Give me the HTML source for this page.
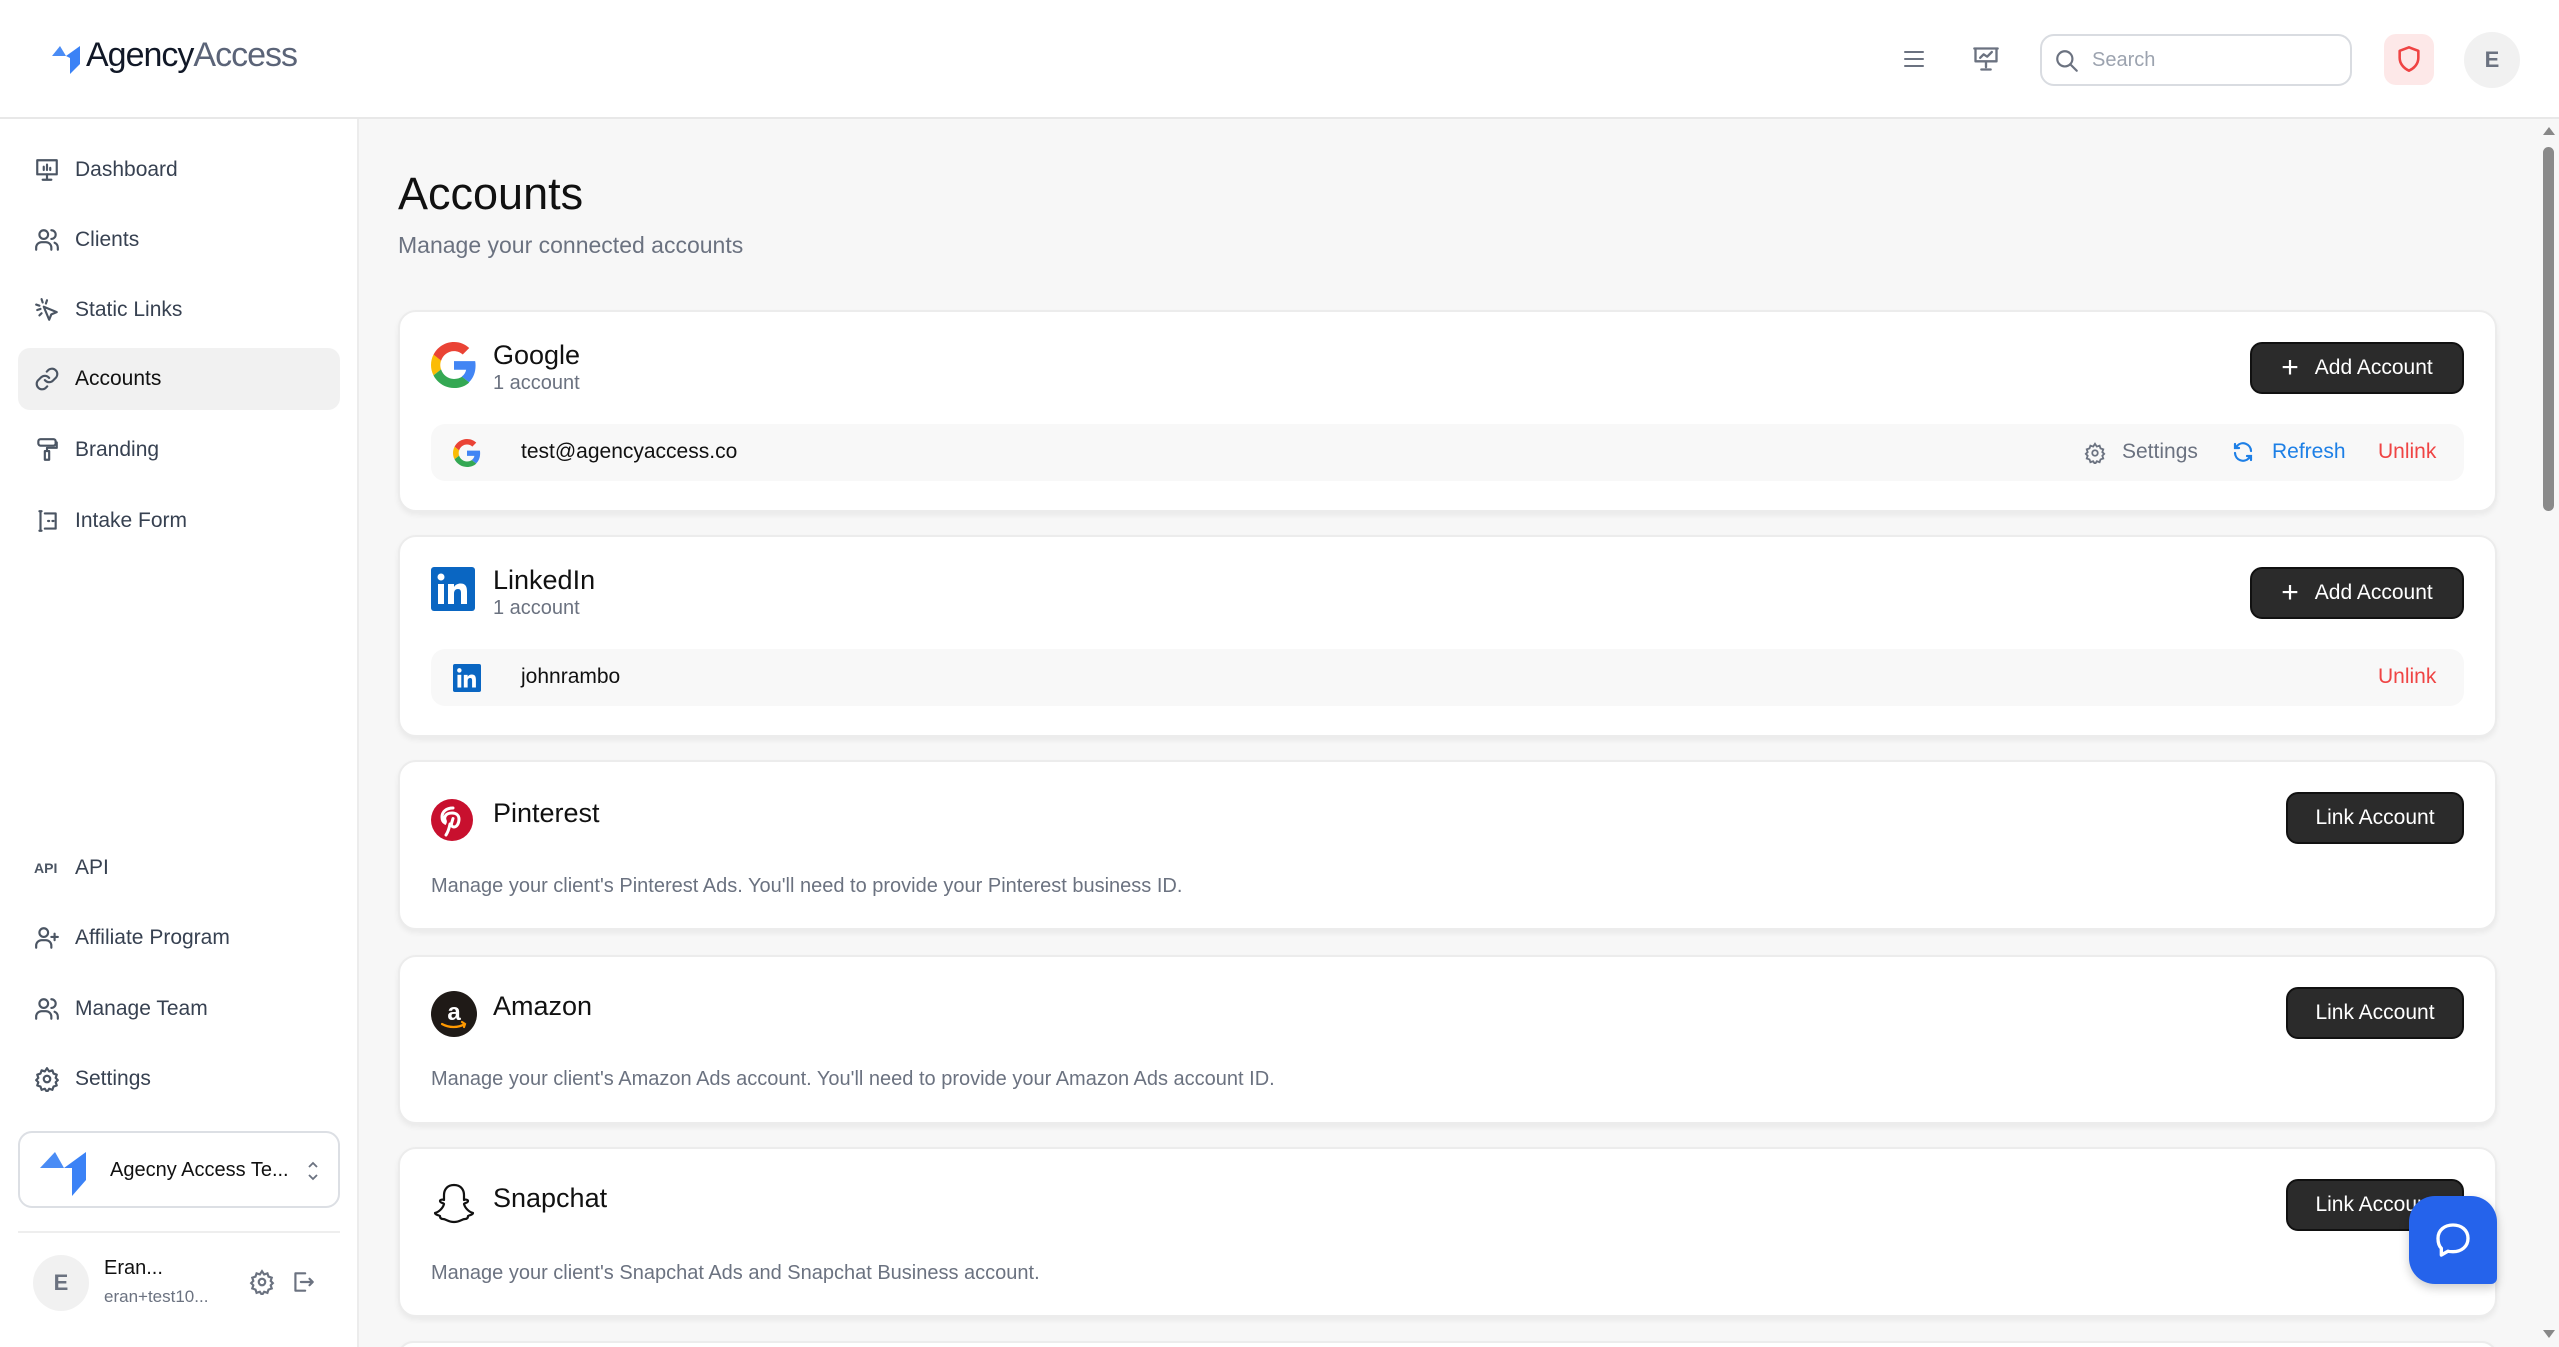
<!DOCTYPE html>
<html><head><meta charset="utf-8"><style>
*{box-sizing:border-box;margin:0;padding:0}
html,body{width:2559px;height:1347px;overflow:hidden}
body{background:#f7f7f7;font-family:"Liberation Sans",sans-serif;color:#111}
#wrap{position:relative;width:2559px;height:1347px;overflow:hidden}
.hdr{position:absolute;left:0;top:0;width:2559px;height:119px;background:#fff;border-bottom:2px solid #e8e8e8}
.side{position:absolute;left:0;top:119px;width:359px;height:1228px;background:#fff;border-right:2px solid #ececec}
.nav{position:absolute;left:18px;width:322px;height:62px;display:flex;align-items:center;font-size:21px;color:#374151;border-radius:12px}
.nav svg{position:absolute;left:16px;width:26px;height:26px;fill:none;stroke:#4b5563;stroke-width:2;stroke-linecap:round;stroke-linejoin:round}
.nav span{position:absolute;left:57px}
.nav.act{background:#f1f1f1;color:#111}
.card{position:absolute;left:398px;width:2099px;background:#fff;border:2px solid #ececec;border-radius:18px;box-shadow:0 3px 6px rgba(0,0,0,.06)}
.title{position:absolute;left:93px;font-size:27px;color:#111}
.sub{position:absolute;left:93px;font-size:20px;color:#6b7280}
.row{position:absolute;left:31px;right:31px;height:57px;background:#f8f8f8;border-radius:14px}
.row .t{position:absolute;left:90px;top:16px;font-size:21px}
.btn{position:absolute;right:31px;height:52px;background:#2b2b2b;border:2px solid #111;border-radius:12px;color:#fff;font-size:21px;display:flex;align-items:center;justify-content:center}
.desc{position:absolute;left:31px;font-size:20px;color:#6b7280}
.ic{position:absolute;left:31px}
</style></head><body><div id="wrap">
<div class="hdr">
 <svg style="position:absolute;left:50px;top:42px" width="34" height="34" viewBox="0 0 34 34"><path d="M2 14 L10 4 L16 14 Z" fill="#4a8cf5"/><path d="M16 14 L30 4 L30 22 L20 32 L20 16 Z" fill="#3b82f6"/></svg>
 <div style="position:absolute;left:86px;top:36px;font-size:34px;letter-spacing:-1px"><span style="color:#111827">Agency</span><span style="color:#5b6478">Access</span></div>
 <svg style="position:absolute;left:1902px;top:47px" width="24" height="24" viewBox="0 0 24 24" fill="none" stroke="#6b7280" stroke-width="2" stroke-linecap="round"><path d="M3 5h18M3 12h18M3 19h18"/></svg>
 <svg style="position:absolute;left:1972px;top:45px" width="28" height="28" viewBox="0 0 24 24" fill="none" stroke="#6b7280" stroke-width="2" stroke-linecap="round" stroke-linejoin="round"><path d="M2 3h20M3 3v11h18V3M12 14v5M8 21h8M7 11l3-3 3 2 4-4"/></svg>
 <div style="position:absolute;left:2040px;top:34px;width:312px;height:52px;border:2px solid #d9dce1;border-radius:14px">
  <svg style="position:absolute;left:12px;top:12px" width="26" height="26" viewBox="0 0 24 24" fill="none" stroke="#6b7280" stroke-width="2" stroke-linecap="round"><circle cx="10" cy="10" r="7"/><path d="M15 15l6 6"/></svg>
  <span style="position:absolute;left:50px;top:13px;font-size:20px;color:#9ca3af">Search</span></div>
 <div style="position:absolute;left:2384px;top:34px;width:50px;height:51px;background:#fde8e8;border-radius:12px">
  <svg style="position:absolute;left:11px;top:11px" width="28" height="28" viewBox="0 0 24 24" fill="none" stroke="#ef4444" stroke-width="2.2" stroke-linejoin="round"><path d="M12 2l8 3v6c0 5-3.5 9-8 11-4.5-2-8-6-8-11V5z"/></svg></div>
 <div style="position:absolute;left:2464px;top:32px;width:56px;height:56px;border-radius:50%;background:#f1f1f1;color:#6b7280;font-size:22px;font-weight:bold;display:flex;align-items:center;justify-content:center">E</div>
</div>
<div class="side">
 <div class="nav" style="top:20px"><svg viewBox="0 0 24 24"><rect x="3" y="3" width="18" height="13"/><path d="M12 16v5M8 21h8M9 12V9M12 12V7M15 12v-2"/></svg><span>Dashboard</span></div>
 <div class="nav" style="top:90px"><svg viewBox="0 0 24 24"><circle cx="9" cy="7" r="4"/><path d="M2 21v-2a5 5 0 0 1 5-5h4a5 5 0 0 1 5 5v2M16 3a4 4 0 0 1 0 8M22 21v-2a5 5 0 0 0-3-4.5"/></svg><span>Clients</span></div>
 <div class="nav" style="top:160px"><svg viewBox="0 0 24 24"><path d="M9 9l5 12 2-5 5-2z M7 2l1 3M2 7l3 1M12 3l-1 3M3 12l3-1M5 17l2-2"/></svg><span>Static Links</span></div>
 <div class="nav act" style="top:229px"><svg viewBox="0 0 24 24"><path d="M10 13a5 5 0 0 0 7.5.5l3-3a5 5 0 0 0-7-7l-1.7 1.7M14 11a5 5 0 0 0-7.5-.5l-3 3a5 5 0 0 0 7 7l1.7-1.7"/></svg><span>Accounts</span></div>
 <div class="nav" style="top:300px"><svg viewBox="0 0 24 24"><rect x="4" y="2" width="16" height="6" rx="2"/><path d="M20 5h1v5h-9v3M10 13h4v8h-4z"/></svg><span>Branding</span></div>
 <div class="nav" style="top:371px"><svg viewBox="0 0 24 24"><path d="M5 3h2M5 21h2M6 3v18M10 5h10v14H10M13 12h1M17 12h1"/></svg><span>Intake Form</span></div>
 <div class="nav" style="top:718px"><span style="left:16px;font-size:14px;font-weight:bold;color:#4b5563">API</span><span>API</span></div>
 <div class="nav" style="top:788px"><svg viewBox="0 0 24 24"><circle cx="9" cy="7" r="4"/><path d="M2 21v-2a5 5 0 0 1 5-5h4a5 5 0 0 1 5 5v2M19 8v6M16 11h6"/></svg><span>Affiliate Program</span></div>
 <div class="nav" style="top:859px"><svg viewBox="0 0 24 24"><circle cx="9" cy="7" r="4"/><path d="M2 21v-2a5 5 0 0 1 5-5h4a5 5 0 0 1 5 5v2M16 3a4 4 0 0 1 0 8M22 21v-2a5 5 0 0 0-3-4.5"/></svg><span>Manage Team</span></div>
 <div class="nav" style="top:929px"><svg viewBox="0 0 24 24"><circle cx="12" cy="12" r="3"/><path d="M12 2l2 3 3-1 1 3 3 1-1 3 2 2-2 2 1 3-3 1-1 3-3-1-2 3-2-3-3 1-1-3-3-1 1-3-2-2 2-2-1-3 3-1 1-3 3 1z"/></svg><span>Settings</span></div>
 <div style="position:absolute;left:18px;top:1012px;width:322px;height:77px;border:2px solid #dcdfe4;border-radius:14px">
  <svg style="position:absolute;left:20px;top:13px" width="50" height="50" viewBox="0 0 50 50"><path d="M0 22L15 6 24 22Z" fill="#4a8cf5"/><path d="M24 22L46 6V34L32 50V22Z" fill="#3b82f6"/></svg>
  <span style="position:absolute;left:90px;top:26px;font-size:20px">Agecny Access Te...</span>
  <svg style="position:absolute;left:286px;top:26px" width="14" height="24" viewBox="0 0 14 24" fill="none" stroke="#6b7280" stroke-width="1.8"><path d="M3 8l4-4 4 4M3 16l4 4 4-4"/></svg></div>
 <div style="position:absolute;left:18px;top:1112px;width:322px;height:2px;background:#eee"></div>
 <div style="position:absolute;left:33px;top:1136px;width:56px;height:56px;border-radius:50%;background:#f1f1f1;color:#6b7280;font-size:22px;font-weight:bold;display:flex;align-items:center;justify-content:center">E</div>
 <div style="position:absolute;left:104px;top:1138px;font-size:20px;color:#111">Eran...</div>
 <div style="position:absolute;left:104px;top:1168px;font-size:17px;color:#6b7280">eran+test10...</div>
 <svg style="position:absolute;left:249px;top:1150px" width="26" height="26" viewBox="0 0 24 24" fill="none" stroke="#6b7280" stroke-width="2"><circle cx="12" cy="12" r="3"/><path d="M12 2l2 3 3-1 1 3 3 1-1 3 2 2-2 2 1 3-3 1-1 3-3-1-2 3-2-3-3 1-1-3-3-1 1-3-2-2 2-2-1-3 3-1 1-3 3 1z"/></svg>
 <svg style="position:absolute;left:290px;top:1150px" width="26" height="26" viewBox="0 0 24 24" fill="none" stroke="#6b7280" stroke-width="2" stroke-linecap="round" stroke-linejoin="round"><path d="M14 4H5v16h9M10 12h11M18 9l3 3-3 3"/></svg>
</div>

<div style="position:absolute;left:398px;top:168px;font-size:45px;color:#111">Accounts</div>
<div style="position:absolute;left:398px;top:232px;font-size:23px;color:#6b7280">Manage your connected accounts</div>

<div class="card" style="top:310px;height:202px">
 <svg class="ic" style="top:30px" width="46" height="46" viewBox="0 0 48 48"><path fill="#EA4335" d="M24 9.5c3.5 0 6.6 1.2 9.1 3.6l6.8-6.8C35.8 2.4 30.3 0 24 0 14.6 0 6.6 5.4 2.6 13.3l7.9 6.2C12.4 13.7 17.7 9.5 24 9.5z"/><path fill="#4285F4" d="M46.5 24.5c0-1.6-.1-3.1-.4-4.5H24v9h12.7c-.6 2.9-2.2 5.4-4.7 7.1l7.6 5.9c4.4-4.1 6.9-10.1 6.9-17.5z"/><path fill="#FBBC05" d="M10.5 28.6c-.5-1.4-.8-3-.8-4.6s.3-3.2.8-4.6l-7.9-6.2C.9 16.5 0 20.1 0 24s.9 7.5 2.6 10.8z"/><path fill="#34A853" d="M24 48c6.5 0 11.9-2.1 15.9-5.8l-7.6-5.9c-2.1 1.4-4.9 2.3-8.3 2.3-6.3 0-11.6-4.2-13.5-10l-7.9 6.2C6.6 42.6 14.6 48 24 48z"/></svg>
 <div class="title" style="top:28px">Google</div><div class="sub" style="top:60px">1 account</div>
 <div class="btn" style="top:30px;width:214px"><span style="font-size:30px;margin-right:16px;font-weight:300">+</span>Add Account</div>
 <div class="row" style="top:112px">
  <svg style="position:absolute;left:22px;top:15px" width="28" height="28" viewBox="0 0 48 48"><path fill="#EA4335" d="M24 9.5c3.5 0 6.6 1.2 9.1 3.6l6.8-6.8C35.8 2.4 30.3 0 24 0 14.6 0 6.6 5.4 2.6 13.3l7.9 6.2C12.4 13.7 17.7 9.5 24 9.5z"/><path fill="#4285F4" d="M46.5 24.5c0-1.6-.1-3.1-.4-4.5H24v9h12.7c-.6 2.9-2.2 5.4-4.7 7.1l7.6 5.9c4.4-4.1 6.9-10.1 6.9-17.5z"/><path fill="#FBBC05" d="M10.5 28.6c-.5-1.4-.8-3-.8-4.6s.3-3.2.8-4.6l-7.9-6.2C.9 16.5 0 20.1 0 24s.9 7.5 2.6 10.8z"/><path fill="#34A853" d="M24 48c6.5 0 11.9-2.1 15.9-5.8l-7.6-5.9c-2.1 1.4-4.9 2.3-8.3 2.3-6.3 0-11.6-4.2-13.5-10l-7.9 6.2C6.6 42.6 14.6 48 24 48z"/></svg>
  <span class="t">test@agencyaccess.co</span>
  <svg style="position:absolute;left:1653px;top:18px" width="22" height="22" viewBox="0 0 24 24" fill="none" stroke="#6b7280" stroke-width="2"><circle cx="12" cy="12" r="3"/><path d="M12 2l2 3 3-1 1 3 3 1-1 3 2 2-2 2 1 3-3 1-1 3-3-1-2 3-2-3-3 1-1-3-3-1 1-3-2-2 2-2-1-3 3-1 1-3 3 1z"/></svg>
  <span style="position:absolute;left:1691px;top:16px;font-size:21px;color:#6b7280">Settings</span>
  <svg style="position:absolute;left:1800px;top:16px" width="24" height="24" viewBox="0 0 24 24" fill="none" stroke="#1d7fe6" stroke-width="2.2" stroke-linecap="round"><path d="M20 11a8 8 0 0 0-14-5l-2 2M4 4v4h4M4 13a8 8 0 0 0 14 5l2-2M20 20v-4h-4"/></svg>
  <span style="position:absolute;left:1841px;top:16px;font-size:21px;color:#1d7fe6">Refresh</span>
  <span style="position:absolute;left:1947px;top:16px;font-size:21px;color:#ef4444">Unlink</span>
 </div>
</div>

<div class="card" style="top:535px;height:202px">
 <svg class="ic" style="top:30px" width="44" height="44" viewBox="0 0 44 44"><rect width="44" height="44" rx="3" fill="#0a66c2"/><rect x="7" y="17" width="6" height="20" fill="#fff"/><circle cx="10" cy="10" r="3.5" fill="#fff"/><path d="M17 17h6v3c1.5-2.5 4-3.5 6.5-3.5 5 0 6.5 3 6.5 8V37h-6V26c0-2.5-.7-4-3-4s-4 1.6-4 4.5V37h-6z" fill="#fff"/></svg>
 <div class="title" style="top:28px">LinkedIn</div><div class="sub" style="top:60px">1 account</div>
 <div class="btn" style="top:30px;width:214px"><span style="font-size:30px;margin-right:16px;font-weight:300">+</span>Add Account</div>
 <div class="row" style="top:112px">
  <svg style="position:absolute;left:22px;top:15px" width="28" height="28" viewBox="0 0 44 44"><rect width="44" height="44" rx="3" fill="#0a66c2"/><rect x="7" y="17" width="6" height="20" fill="#fff"/><circle cx="10" cy="10" r="3.5" fill="#fff"/><path d="M17 17h6v3c1.5-2.5 4-3.5 6.5-3.5 5 0 6.5 3 6.5 8V37h-6V26c0-2.5-.7-4-3-4s-4 1.6-4 4.5V37h-6z" fill="#fff"/></svg>
  <span class="t">johnrambo</span>
  <span style="position:absolute;left:1947px;top:16px;font-size:21px;color:#ef4444">Unlink</span>
 </div>
</div>

<div class="card" style="top:760px;height:170px">
 <svg class="ic" style="top:37px" width="42" height="42" viewBox="0 0 42 42"><circle cx="21" cy="21" r="21" fill="#c8102e"/><path d="M19 25c-1 5-2 8-4 11M22 9c-7 0-11 4-11 9 0 3 1 5 3 6 .5-1 .5-2 0-3-1-2 0-7 7-7 5 0 7 3 7 6 0 4-2 8-5 8-2 0-3-2-2.5-3.5l1.5-5" fill="none" stroke="#fff" stroke-width="3" stroke-linecap="round"/></svg>
 <div class="title" style="top:36px">Pinterest</div>
 <div class="btn" style="top:30px;width:178px">Link Account</div>
 <div class="desc" style="top:113px">Manage your client's Pinterest Ads. You'll need to provide your Pinterest business ID.</div>
</div>

<div class="card" style="top:955px;height:169px">
 <svg class="ic" style="top:34px" width="46" height="46" viewBox="0 0 46 46"><circle cx="23" cy="23" r="23" fill="#1f1a17"/><text x="23" y="29" text-anchor="middle" font-family="Liberation Sans" font-weight="bold" font-size="24" fill="#fff">a</text><path d="M11 33c7 4 16 4 23 0M31 31l3 2-1 3" fill="none" stroke="#f90" stroke-width="2.2" stroke-linecap="round"/></svg>
 <div class="title" style="top:34px">Amazon</div>
 <div class="btn" style="top:30px;width:178px">Link Account</div>
 <div class="desc" style="top:111px">Manage your client's Amazon Ads account. You'll need to provide your Amazon Ads account ID.</div>
</div>

<div class="card" style="top:1147px;height:170px">
 <svg class="ic" style="top:33px" width="46" height="46" viewBox="0 0 46 46"><path d="M23 3c-7 0-10 5-10 10v5c-2-1-4 0-4 1 0 2 4 2 4 3-1 4-5 8-9 9 0 2 4 2 5 3 0 2 1 3 3 3 3 0 5 3 11 3s8-3 11-3c2 0 3-1 3-3 1-1 5-1 5-3-4-1-8-5-9-9 0-1 4-1 4-3 0-1-2-2-4-1v-5c0-5-3-10-10-10z" fill="#fff" stroke="#111" stroke-width="2.2" stroke-linejoin="round"/></svg>
 <div class="title" style="top:34px">Snapchat</div>
 <div class="btn" style="top:30px;width:178px">Link Account</div>
 <div class="desc" style="top:113px">Manage your client's Snapchat Ads and Snapchat Business account.</div>
</div>
<div class="card" style="top:1341px;height:30px"></div>

<div style="position:absolute;left:2409px;top:1196px;width:88px;height:88px;background:#2563eb;border-radius:26px 26px 6px 26px;box-shadow:0 4px 10px rgba(0,0,0,.2)">
 <svg style="position:absolute;left:24px;top:24px" width="40" height="40" viewBox="0 0 24 24" fill="none" stroke="#fff" stroke-width="2" stroke-linejoin="round"><path d="M12 3c5 0 9 3 9 8s-4 8-9 8c-1 0-2 0-3-.3L5 21v-4c-1.5-1.5-2-3.5-2-6 0-5 4-8 9-8z"/></svg></div>

<div style="position:absolute;left:2538px;top:119px;width:21px;height:1228px;background:#f7f7f7"></div>
<svg style="position:absolute;left:2541px;top:125px" width="16" height="12" viewBox="0 0 16 12"><path d="M2 10L8 2l6 8z" fill="#888"/></svg>
<div style="position:absolute;left:2543px;top:147px;width:11px;height:364px;background:#8a8a8a;border-radius:6px"></div>
<svg style="position:absolute;left:2541px;top:1328px" width="16" height="12" viewBox="0 0 16 12"><path d="M2 2l6 8 6-8z" fill="#888"/></svg>
</div></body></html>
